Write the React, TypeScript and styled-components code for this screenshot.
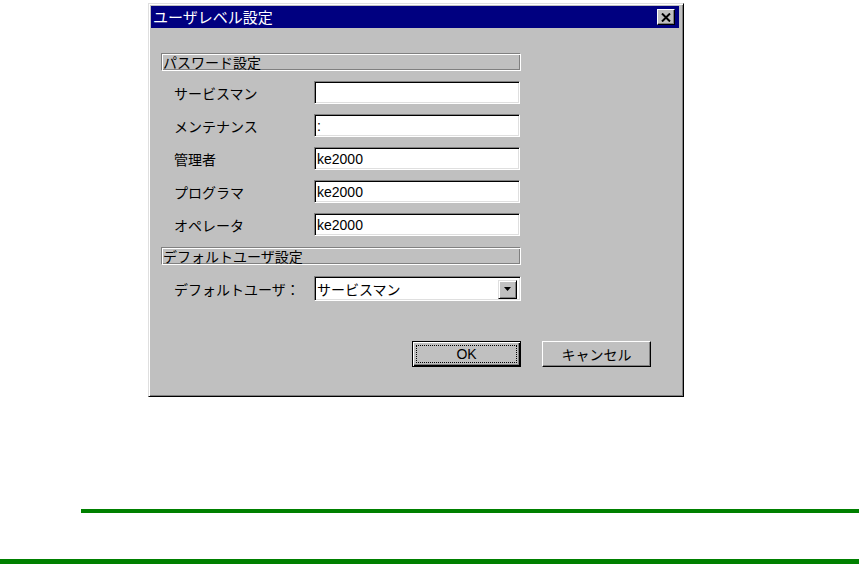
import React from "react";
import styled, { createGlobalStyle } from "styled-components";

const GlobalStyle = createGlobalStyle`
  body {
    margin: 0;
    background: #ffffff;
    font-family: "Liberation Sans", "Noto Sans CJK JP", sans-serif;
  }
`;

const Page = styled.div`
  width: 861px;
  height: 564px;
  display: flex;
  flex-direction: column;
  overflow: hidden;
`;

const Window = styled.div`
  box-sizing: border-box;
  width: 536px;
  height: 394px;
  margin: 3px 0 0 148px;
  padding: 1px;
  background: #c0c0c0;
  border-top: 1px solid #dfdfdf;
  border-left: 1px solid #dfdfdf;
  border-right: 1px solid #000000;
  border-bottom: 1px solid #000000;
  box-shadow: inset 1px 1px #ffffff, inset -1px -1px #808080;
  display: flex;
  flex-direction: column;
`;

const TitleBar = styled.div`
  height: 22px;
  margin: 1px 3px 0 1px;
  padding: 0 4px 0 2px;
  background: #000080;
  display: flex;
  align-items: center;
  justify-content: space-between;
`;

const Title = styled.span`
  color: #ffffff;
  font-family: "Noto Sans CJK JP", sans-serif;
  font-size: 15px;
  line-height: 22px;
`;

const CloseButton = styled.div`
  box-sizing: border-box;
  width: 18px;
  height: 16px;
  background: #c0c0c0;
  border-top: 1px solid #ffffff;
  border-left: 1px solid #ffffff;
  border-right: 1px solid #000000;
  border-bottom: 1px solid #000000;
  box-shadow: inset -1px -1px #808080;
  display: flex;
  align-items: center;
  justify-content: center;
`;

const Content = styled.div`
  padding: 25px 0 0 11px;
  display: flex;
  flex-direction: column;
`;

const GroupHeader = styled.div<{ $top?: number }>`
  box-sizing: border-box;
  width: 360px;
  height: 18px;
  margin-top: ${({ $top }) => $top ?? 0}px;
  padding-left: 1px;
  border-top: 1px solid #808080;
  border-left: 1px solid #808080;
  border-right: 1px solid #ffffff;
  border-bottom: 1px solid #ffffff;
  box-shadow: inset 1px 1px #ffffff, inset -1px -1px #808080;
  font-family: "Noto Sans CJK JP", sans-serif;
  font-size: 14px;
  line-height: 16px;
  color: #000000;
`;

const Fields = styled.div`
  margin-top: 10px;
  display: flex;
  flex-direction: column;
  gap: 10px;
`;

const FieldRow = styled.div`
  display: grid;
  grid-template-columns: 153px 206px;
  align-items: center;
  height: 23px;
`;

const Label = styled.span`
  padding-left: 13px;
  font-family: "Noto Sans CJK JP", sans-serif;
  font-size: 14px;
  line-height: 16px;
  color: #000000;
`;

const Field = styled.div<{ $height?: number }>`
  box-sizing: border-box;
  height: ${({ $height }) => $height ?? 23}px;
  background: #ffffff;
  border-top: 1px solid #808080;
  border-left: 1px solid #808080;
  border-right: 1px solid #ffffff;
  border-bottom: 1px solid #ffffff;
  box-shadow: inset 1px 1px #000000, inset -1px -1px #dfdfdf;
  padding: 1px 2px 0 2px;
  display: flex;
  align-items: center;
  justify-content: space-between;
  font-size: 14px;
  color: #000000;
`;

const FieldText = styled.span<{ $jp?: boolean }>`
  font-family: ${({ $jp }) =>
    $jp ? `"Noto Sans CJK JP", sans-serif` : `"Liberation Sans", sans-serif`};
  font-size: 14px;
  line-height: 16px;
`;

const ComboRow = styled(FieldRow)`
  margin-top: 11px;
  height: 25px;
  grid-template-columns: 153px 207px;
`;

const DropButton = styled.div`
  box-sizing: border-box;
  width: 19px;
  height: 19px;
  background: #c0c0c0;
  border-top: 1px solid #dfdfdf;
  border-left: 1px solid #dfdfdf;
  border-right: 1px solid #000000;
  border-bottom: 1px solid #000000;
  box-shadow: inset 1px 1px #ffffff, inset -1px -1px #808080;
  display: flex;
  align-items: center;
  justify-content: center;
  margin-right: 1px;
`;

const ButtonRow = styled.div`
  margin-top: 40px;
  padding-left: 251px;
  display: flex;
  gap: 21px;
`;

const Button = styled.div<{ $default?: boolean }>`
  box-sizing: border-box;
  width: 109px;
  height: 26px;
  background: #c0c0c0;
  border: 1px solid #000000;
  border-top-color: ${({ $default }) => ($default ? "#000000" : "#ffffff")};
  border-left-color: ${({ $default }) => ($default ? "#000000" : "#ffffff")};
  box-shadow: ${({ $default }) =>
    $default
      ? "inset 1px 1px #ffffff, inset -1px -1px #000000, inset -2px -2px #808080"
      : "inset -1px -1px #808080"};
  display: flex;
  align-items: center;
  justify-content: center;
  padding: 3px;
  font-family: "Noto Sans CJK JP", sans-serif;
  font-size: 14px;
  line-height: 16px;
  color: #000000;
`;

const FocusRing = styled.div`
  box-sizing: border-box;
  width: 100%;
  height: 100%;
  border: 1px dotted #000000;
  display: flex;
  align-items: center;
  justify-content: center;
  font-family: "Liberation Sans", sans-serif;
`;

const GreenRule = styled.div<{ $inset: number; $thick: number; $top: number }>`
  margin-top: ${({ $top }) => $top}px;
  margin-left: ${({ $inset }) => $inset}px;
  margin-right: 2px;
  height: ${({ $thick }) => $thick}px;
  background: #008000;
`;

const passwordRows = [
  { label: "サービスマン", value: "" },
  { label: "メンテナンス", value: ":" },
  { label: "管理者", value: "ke2000" },
  { label: "プログラマ", value: "ke2000" },
  { label: "オペレータ", value: "ke2000" },
];

function CloseGlyph() {
  return (
    <svg width="10" height="9" viewBox="0 0 10 9">
      <path d="M1 0.5 L9 8.5 M9 0.5 L1 8.5" stroke="#000" strokeWidth="2" />
    </svg>
  );
}

function ArrowGlyph() {
  return (
    <svg width="7" height="4" viewBox="0 0 7 4">
      <path d="M0 0 H7 L3.5 4 Z" fill="#000" />
    </svg>
  );
}

export default function App() {
  return (
    <>
      <GlobalStyle />
      <Page>
        <Window>
          <TitleBar>
            <Title>ユーザレベル設定</Title>
            <CloseButton>
              <CloseGlyph />
            </CloseButton>
          </TitleBar>
          <Content>
            <GroupHeader>パスワード設定</GroupHeader>
            <Fields>
              {passwordRows.map((row) => (
                <FieldRow key={row.label}>
                  <Label>{row.label}</Label>
                  <Field>
                    <FieldText>{row.value}</FieldText>
                  </Field>
                </FieldRow>
              ))}
            </Fields>
            <GroupHeader $top={11}>デフォルトユーザ設定</GroupHeader>
            <ComboRow>
              <Label>デフォルトユーザ：</Label>
              <Field $height={25}>
                <FieldText $jp>サービスマン</FieldText>
                <DropButton>
                  <ArrowGlyph />
                </DropButton>
              </Field>
            </ComboRow>
            <ButtonRow>
              <Button $default>
                <FocusRing>OK</FocusRing>
              </Button>
              <Button>キャンセル</Button>
            </ButtonRow>
          </Content>
        </Window>
        <GreenRule $top={112} $inset={81} $thick={4} />
        <GreenRule $top={46} $inset={0} $thick={5} />
      </Page>
    </>
  );
}
